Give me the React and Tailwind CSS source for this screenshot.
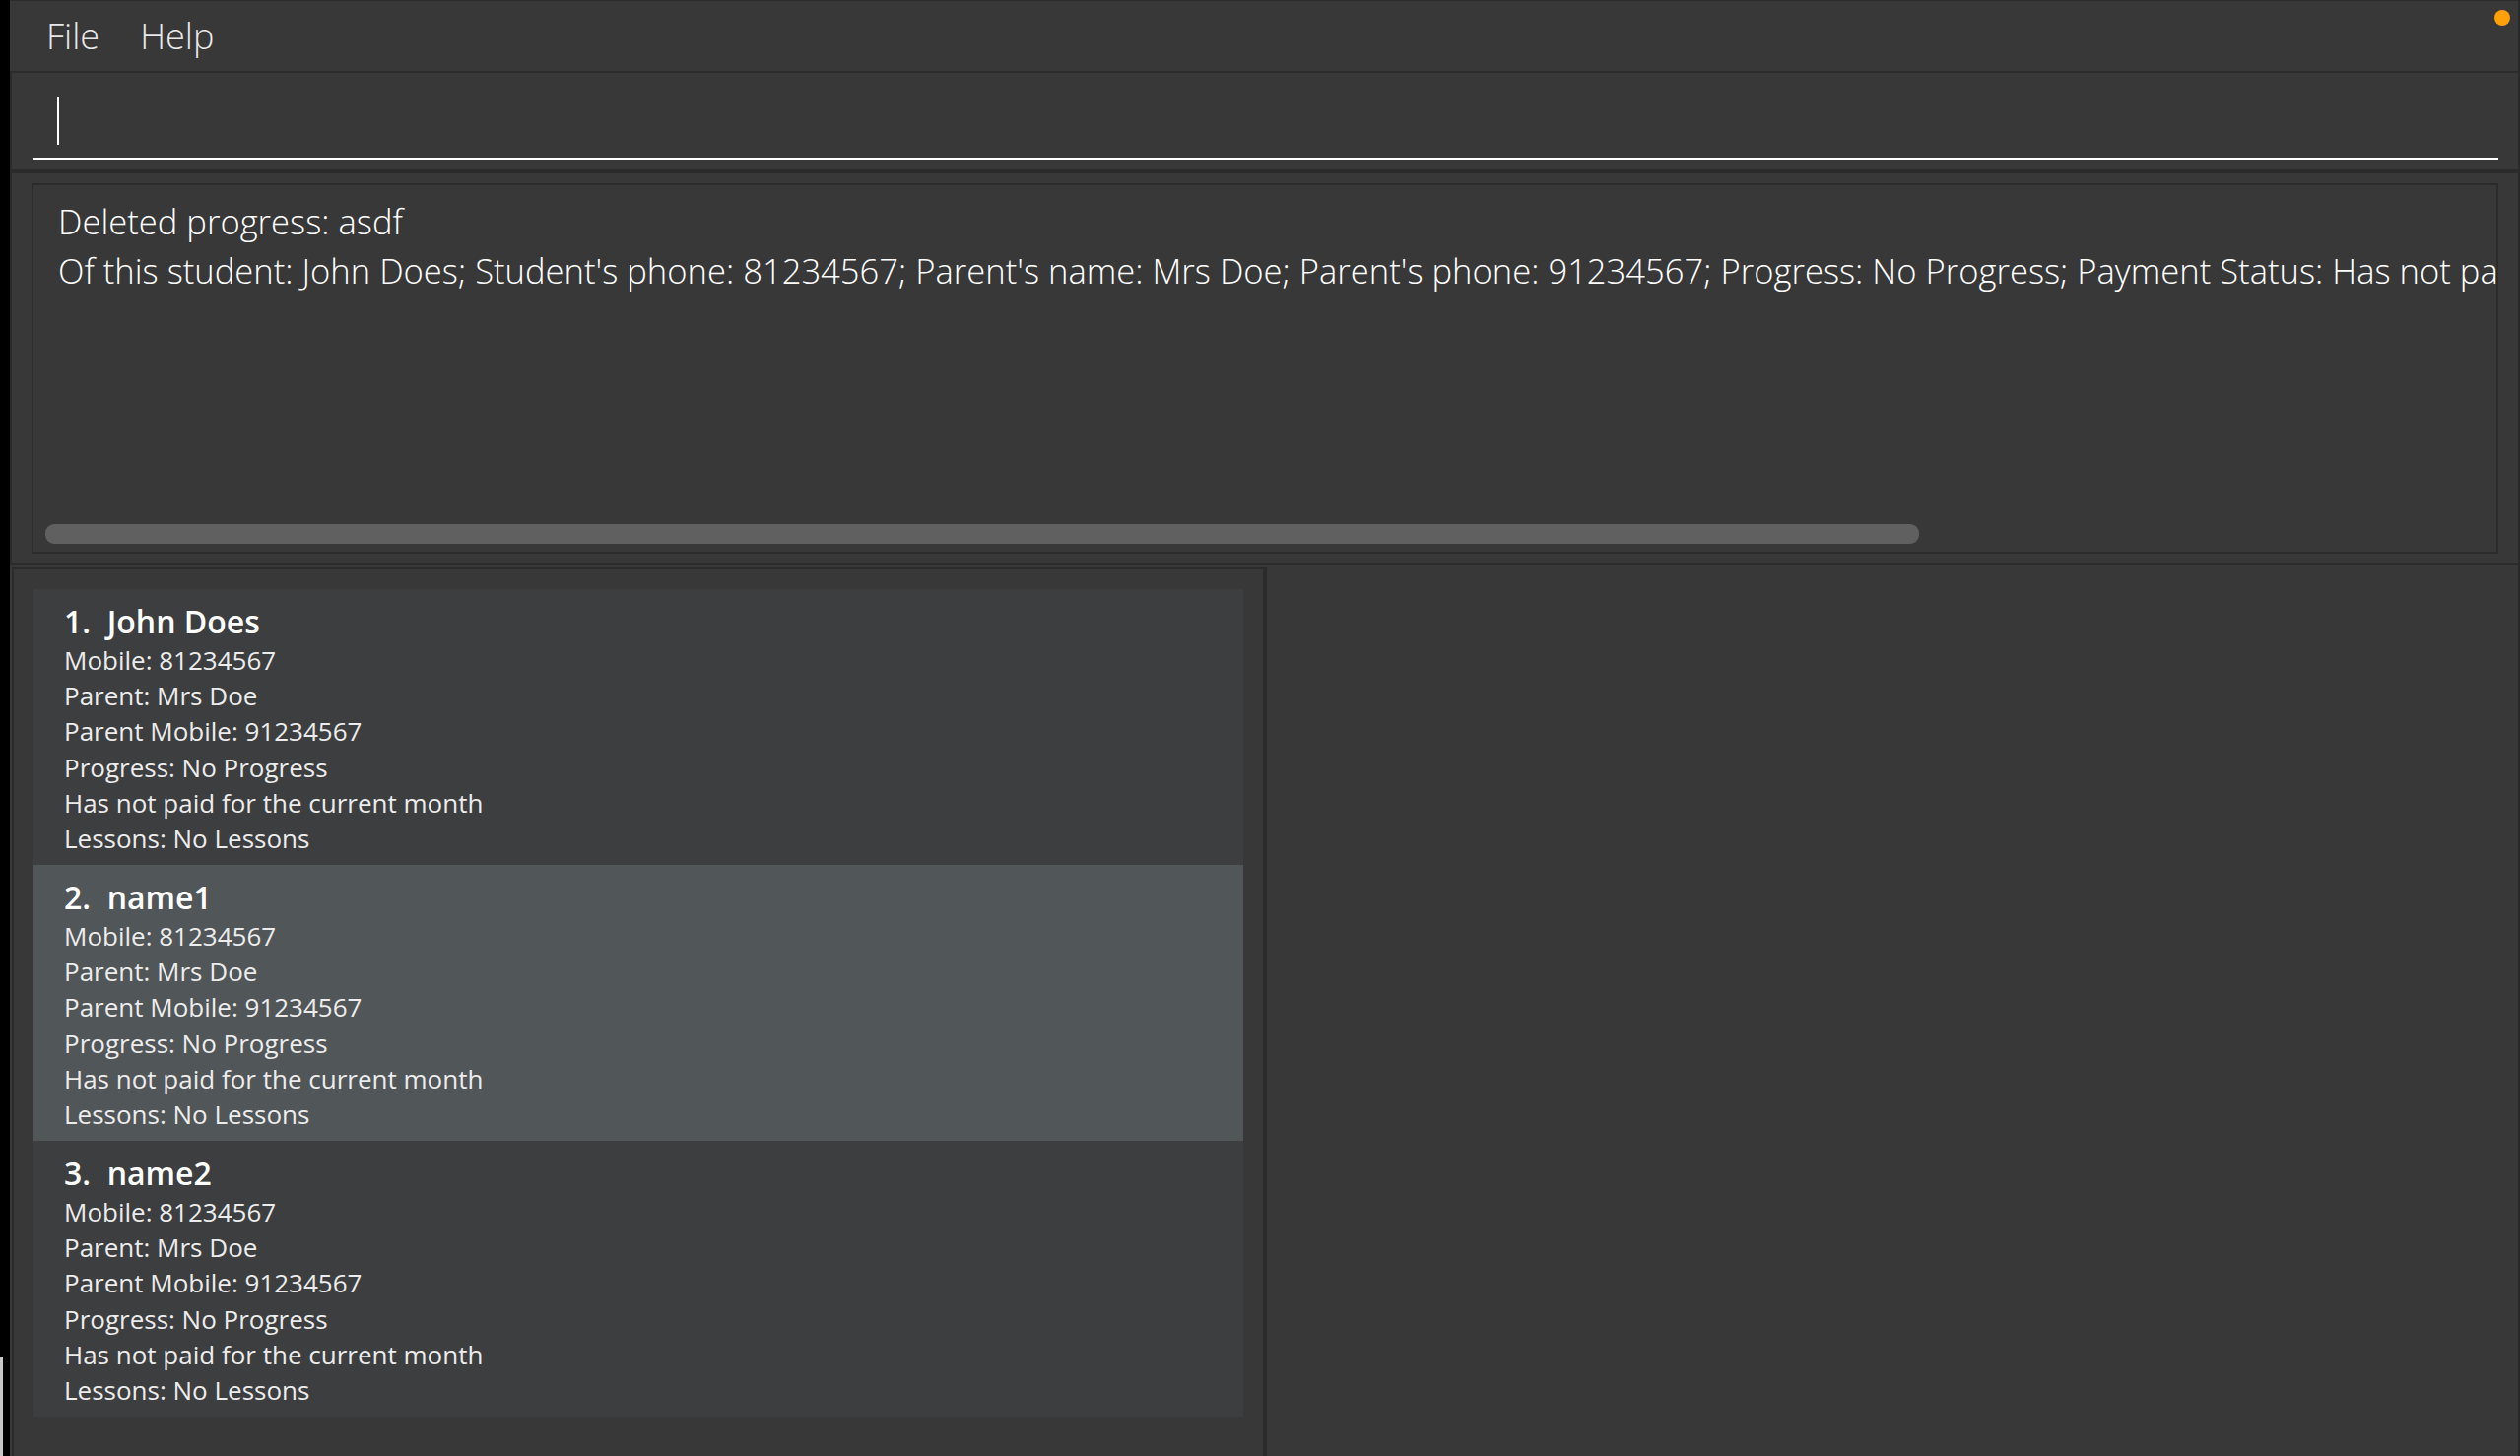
import React from "react";

const students = [
  { n: 1, name: "John Does", bg: "bg-[#3c3e3f]" },
  { n: 2, name: "name1", bg: "bg-[#515658]" },
  { n: 3, name: "name2", bg: "bg-[#3c3e3f]" },
];

function Card({ s }) {
  return (
    <div className={`h-[280px] w-[1228px] ${s.bg} pl-[31px] pt-[11px]`}>
      <div className="whitespace-pre text-[32px] font-semibold leading-[43px] text-white">
        {`${s.n}.  ${s.name}`}
      </div>
      <div className="text-[26px] leading-[36.2px] text-[#ececec]">
        <div>Mobile: 81234567</div>
        <div>Parent: Mrs Doe</div>
        <div>Parent Mobile: 91234567</div>
        <div>Progress: No Progress</div>
        <div>Has not paid for the current month</div>
        <div>Lessons: No Lessons</div>
      </div>
    </div>
  );
}

export default function App() {
  return (
    <div className="flex h-[1478px] w-full overflow-hidden bg-black font-['Open_Sans','Liberation_Sans',sans-serif]">
      <div className="flex w-[10px] flex-col">
        <div className="flex-1" />
        <div className="h-[101px] w-[3px] bg-[#c8c8c8]" />
      </div>
      <div className="relative flex min-w-0 flex-1 flex-col border-r-2 border-[#2b2b2b] bg-[#383838]">
        <div className="absolute right-[8px] top-[10px] h-4 w-4 rounded-full bg-[#ff9f0a]" />
        {/* menu bar */}
        <div className="flex h-[74px] items-center gap-[41px] border-t border-b-2 border-[#2b2b2b] pl-[37px] text-[36px] font-light leading-[49px] text-[#e8e8e8]">
          <span>File</span>
          <span>Help</span>
        </div>
        {/* command box */}
        <div className="h-[98px] border-l-2 border-[#2b2b2b] pl-[22px] pr-[20px] pt-[24px]">
          <div className="h-[64px] border-b-2 border-white pl-[24px]">
            <div className="h-[49px] w-[2px] bg-white" />
          </div>
        </div>
        <div className="h-[4px] bg-[#2b2b2b]" />
        {/* result display */}
        <div className="h-[398px] border-b-2 border-l-2 border-[#2b2b2b] px-[20px] py-[10px]">
          <div className="flex h-full flex-col border-2 border-[#2b2b2b]">
            <div className="min-h-0 flex-1 overflow-hidden whitespace-nowrap pl-[25px] pt-[12px] text-[34.6px] font-light leading-[49px] text-white">
              <div>Deleted progress: asdf</div>
              <div className="pt-[1px]">
                Of this student: John Does; Student's phone: 81234567; Parent's name: Mrs Doe; Parent's phone: 91234567; Progress: No Progress; Payment Status: Has not paid for the current month; Lessons: No Lessons
              </div>
            </div>
            <div className="pb-[8px] pl-[12px]">
              <div className="h-[20px] w-[1902px] rounded-[9px] bg-[#606060]" />
            </div>
          </div>
        </div>
        {/* bottom split */}
        <div className="mt-[2px] flex min-h-0 flex-1">
          <div className="w-[1272px] pl-[2px]">
            <div className="flex h-full flex-col border-l-2 border-t-2 border-[#2b2b2b] pl-[20px] pt-[20px]">
              {students.map((s) => (
                <Card key={s.n} s={s} />
              ))}
            </div>
          </div>
          <div className="w-[4px] bg-[#2b2b2b]" />
          <div className="flex-1" />
        </div>
      </div>
    </div>
  );
}
